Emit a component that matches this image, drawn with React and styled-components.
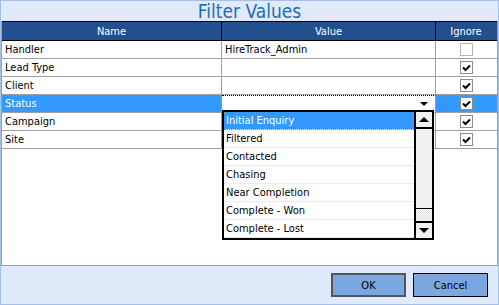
import React from 'react';
import styled, { createGlobalStyle } from 'styled-components';

const GlobalStyle = createGlobalStyle`
    html, body {
        margin: 0;
        padding: 0;
        background: #ffffff;
    }
    * {
        box-sizing: border-box;
    }
`

const FONT = `"DejaVu Sans Condensed", "DejaVu Sans", "Liberation Sans", sans-serif`

const Window = styled.div`
    width: 499px;
    height: 305px;
    display: flex;
    flex-direction: column;
    background: #dfeafb;
    border: 1px solid #a6bfe6;
    font-family: ${FONT};
    font-size: 11px;
    color: #000;
`

const TitleBar = styled.div`
    height: 20px;
    display: flex;
    align-items: center;
    justify-content: center;
    color: #1f6db8;
    font-size: 19px;
    line-height: 20px;
`

const Grid = styled.div`
    position: relative;
    flex: 1;
    background: #ffffff;
    border-left: 1px solid #a0a0a0;
    border-right: 1px solid #a0a0a0;
    border-bottom: 1px solid #a0a0a0;
`

const HeaderRow = styled.div`
    display: grid;
    grid-template-columns: 220px 214px 1fr;
    height: 20px;
    background: #22508f;
    border-top: 1px solid #000;
    border-bottom: 1px solid #000;
    color: #ffffff;
`

const HeaderCell = styled.div`
    display: flex;
    align-items: center;
    justify-content: center;
    border-right: 1px solid ${p => (p.$last ? 'transparent' : '#000')};
`

const Row = styled.div`
    display: grid;
    grid-template-columns: 220px 214px 1fr;
    height: 18px;
    border-bottom: 1px solid #a0a0a0;
`

const Cell = styled.div`
    display: flex;
    align-items: center;
    justify-content: ${p => (p.$center ? 'center' : 'space-between')};
    padding: 0 3px;
    border-right: 1px solid ${p => (p.$last ? 'transparent' : '#a0a0a0')};
    background: ${p => (p.$selected ? '#3399ff' : 'transparent')};
    color: ${p => (p.$selected ? '#ffffff' : '#000')};
    outline: ${p => (p.$selected ? '1px dotted #d0782a' : 'none')};
    outline-offset: -1px;
    border-top: ${p => (p.$editing ? '1px dotted #000' : 'none')};
`

const Check = styled.span`
    width: 13px;
    height: 13px;
    border: 1px solid ${p => (p.$checked ? '#8c8c8c' : '#b4b4b4')};
    background: #ffffff;
    display: flex;
    align-items: center;
    justify-content: center;
`

const DropArrow = styled.span`
    width: 0;
    height: 0;
    border-left: 4px solid transparent;
    border-right: 4px solid transparent;
    border-top: 4px solid #000;
    margin-right: 4px;
`

const ListBox = styled.div`
    position: absolute;
    left: 220px;
    top: 89px;
    width: 212px;
    height: 130px;
    border: 2px solid #000;
    background: #ffffff;
    display: flex;
`

const Items = styled.div`
    flex: 1;
    display: flex;
    flex-direction: column;
`

const Item = styled.div`
    height: 18px;
    display: flex;
    align-items: center;
    padding: 0 2px;
    border-bottom: 1px solid #ececec;
    background: ${p => (p.$active ? '#3399ff' : '#ffffff')};
    color: ${p => (p.$active ? '#ffffff' : '#000')};
    outline: ${p => (p.$active ? '1px dotted #d0782a' : 'none')};
    outline-offset: -1px;
`

const ScrollBar = styled.div`
    width: 18px;
    display: flex;
    flex-direction: column;
    border-left: 2px solid #000;
`

const ScrollButton = styled.div`
    height: 17px;
    background: #f0f0f0;
    display: flex;
    align-items: center;
    justify-content: center;
    border-top: ${p => (p.$down ? '2px solid #000' : 'none')};
    border-bottom: ${p => (p.$down ? 'none' : '2px solid #000')};
`

const Thumb = styled.div`
    height: 80px;
    background: #f0f0f0;
    border-bottom: 1px solid #000;
`

const Track = styled.div`
    flex: 1;
    background-color: #f4f4f4;
    background-image: repeating-conic-gradient(#e2e2e2 0 25%, #fafafa 0 50%);
    background-size: 2px 2px;
`

const Arrow = styled.span`
    width: 0;
    height: 0;
    border-left: 5px solid transparent;
    border-right: 5px solid transparent;
    ${p => (p.$up ? 'border-bottom: 5px solid #000;' : 'border-top: 5px solid #000;')}
`

const Footer = styled.div`
    height: 38px;
    display: flex;
    align-items: center;
    justify-content: flex-end;
    gap: 7px;
    padding-right: 10px;
`

const Button = styled.button`
    width: 75px;
    height: 24px;
    background: #7ba7e1;
    border: ${p => (p.$default ? '2px solid #555555' : '1px solid #000')};
    font-family: ${FONT};
    font-size: 11px;
    color: #000;
    padding: 0;
`

const CheckMark = () => (
    <svg width="9" height="8" viewBox="0 0 9 8">
        <path d="M1 3.5 L3.5 6 L8 1.5" fill="none" stroke="#000" strokeWidth="2" />
    </svg>
)

const rows = [
    { name: 'Handler', value: 'HireTrack_Admin', checked: false },
    { name: 'Lead Type', value: '', checked: true },
    { name: 'Client', value: '', checked: true },
    { name: 'Status', value: '', checked: true, selected: true },
    { name: 'Campaign', value: '', checked: true },
    { name: 'Site', value: '', checked: true },
]

const options = [
    'Initial Enquiry',
    'Filtered',
    'Contacted',
    'Chasing',
    'Near Completion',
    'Complete - Won',
    'Complete - Lost',
]

export default function App () {
    return (
        <>
            <GlobalStyle />
            <Window>
                <TitleBar>Filter Values</TitleBar>
                <Grid>
                    <HeaderRow>
                        <HeaderCell>Name</HeaderCell>
                        <HeaderCell>Value</HeaderCell>
                        <HeaderCell $last>Ignore</HeaderCell>
                    </HeaderRow>
                    {rows.map(r => (
                        <Row key={r.name}>
                            <Cell $selected={r.selected}>{r.name}</Cell>
                            <Cell $editing={r.selected}>
                                <span>{r.value}</span>
                                {r.selected && <DropArrow />}
                            </Cell>
                            <Cell $center $last $selected={r.selected}>
                                <Check $checked={r.checked}>{r.checked && <CheckMark />}</Check>
                            </Cell>
                        </Row>
                    ))}
                    <ListBox>
                        <Items>
                            {options.map((o, i) => (
                                <Item key={o} $active={i === 0}>{o}</Item>
                            ))}
                        </Items>
                        <ScrollBar>
                            <ScrollButton><Arrow $up /></ScrollButton>
                            <Thumb />
                            <Track />
                            <ScrollButton $down><Arrow /></ScrollButton>
                        </ScrollBar>
                    </ListBox>
                </Grid>
                <Footer>
                    <Button $default>OK</Button>
                    <Button>Cancel</Button>
                </Footer>
            </Window>
        </>
    )
}
